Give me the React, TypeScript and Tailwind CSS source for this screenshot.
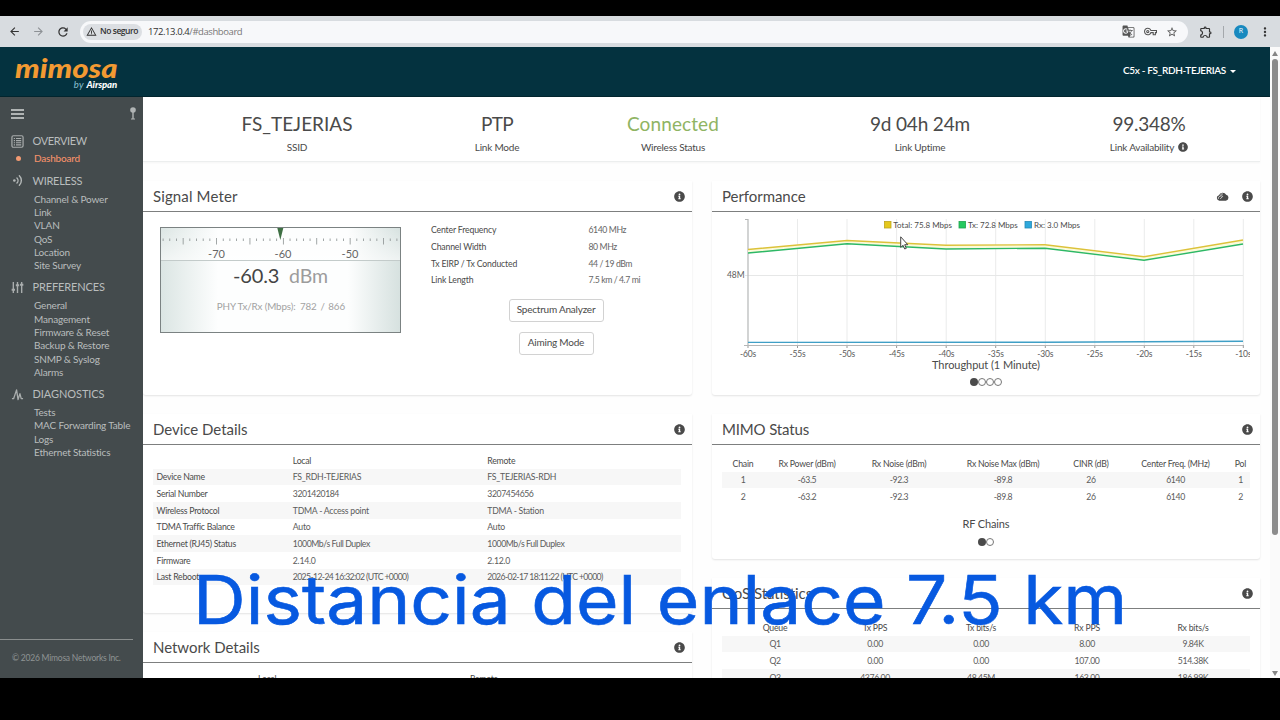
import React from "react";
import {
  MdArrowBack,
  MdArrowForward,
  MdGTranslate,
  MdMoreVert,
  MdOutlineExtension,
  MdOutlineVpnKey,
  MdRefresh,
  MdStarBorder,
  MdWarningAmber,
} from "react-icons/md";
import { FaInfoCircle } from "react-icons/fa";

function BrowserBar() {
  return (
    <div className="flex h-[31px] shrink-0 items-center bg-[#d8dce0] font-['Open_Sans',sans-serif] text-[#333]">
      <div className="flex w-20 items-center pl-2">
        <MdArrowBack className="size-[13px]" />
        <MdArrowForward className="ml-[11px] size-[13px] text-[#8d9195]" />
        <MdRefresh className="ml-[11px] size-[14px]" />
      </div>
      <div className="flex h-[22px] w-[1108px] items-center rounded-full bg-[#f7f8fa] pl-[3px] pr-[10px]">
        <div className="flex h-4 w-[59px] items-center gap-[3px] rounded-full bg-[#dcdfe3] pl-[3px]">
          <MdWarningAmber className="size-[11px]" />
          <span className="text-[8.5px] font-semibold tracking-[-0.45px] whitespace-nowrap">No seguro</span>
        </div>
        <span className="ml-[6px] pt-px text-[9.5px] tracking-[-0.42px] whitespace-nowrap text-[#777]">
          <span className="text-[#333]">172.13.0.4</span>/#dashboard
        </span>
        <div className="ml-auto flex items-center gap-[9px] text-[#555]">
          <MdGTranslate className="size-[13px]" />
          <MdOutlineVpnKey className="size-[13px]" />
          <MdStarBorder className="size-[12px]" />
        </div>
      </div>
      <MdOutlineExtension className="ml-[11px] size-[14px]" />
      <div className="ml-[10px] h-3 w-px bg-[#a4a8ac]" />
      <div className="ml-[10px] flex size-[14px] items-center justify-center rounded-full bg-[#1889bf] text-[7px] text-white">R</div>
      <MdMoreVert className="ml-[10px] size-[14px]" />
    </div>
  );
}

function Header() {
  return (
    <div className="flex h-[50px] shrink-0 items-center justify-between border-b border-[#02252e] bg-[#04323f] pr-[34px] pl-[15px]">
      <div className="flex w-[104px] flex-col pt-[5px]">
        <span className="origin-left scale-x-[1.15] text-[27px] leading-[22px] font-black text-[#f39a32] italic">mimosa</span>
        <span className="self-end pr-[2px] text-[9.5px] leading-[12px] font-black tracking-[-0.1px] text-white italic">
          <span className="pr-[1px] font-normal tracking-[0.3px] text-[#8ec3d6]">by</span> Airspan
        </span>
      </div>
      <div className="mt-[-3px] flex items-center gap-[4px] text-[10px] font-semibold text-white">
        <span className="tracking-[-0.33px] whitespace-nowrap">C5x - FS_RDH-TEJERIAS</span>
        <span className="mt-[2px] border-x-[3px] border-t-[3px] border-x-transparent border-t-white" />
      </div>
    </div>
  );
}

const navIcons = {
  overview: (
    <svg viewBox="0 0 14 14" className="size-[13px]" fill="none" stroke="#a9adad">
      <rect x="1" y="0.8" width="12" height="12.4" rx="1.5" strokeWidth="1.3" />
      <path d="M3 3.7h1.3M3 6h1.3M3 8.3h1.3M3 10.6h1.3M5.4 3.7H11M5.4 6H11M5.4 8.3H11M5.4 10.6H11" strokeWidth="1.2" />
    </svg>
  ),
  wireless: (
    <svg viewBox="0 0 14 14" className="size-[13px]" fill="none" stroke="#b4b8b8" strokeLinecap="round" strokeWidth="1.5">
      <circle cx="3.6" cy="7" r="1.4" fill="#b4b8b8" stroke="none" />
      <path d="M6.4 4.2a4 4 0 0 1 0 5.6M9 1.8a7.4 7.4 0 0 1 0 10.4" />
    </svg>
  ),
  preferences: (
    <svg viewBox="0 0 14 14" className="size-[13px]" fill="none" stroke="#a9adad" strokeWidth="1.5">
      <path d="M2.5 1v12M7 1v12M11.5 1v12" />
      <path d="M0.7 9.5h3.6M5.2 4.5h3.6M9.7 4h3.6" strokeWidth="2.2" />
    </svg>
  ),
  diagnostics: (
    <svg viewBox="0 0 14 14" className="size-[13px]" fill="none" stroke="#a9adad" strokeWidth="1.4" strokeLinejoin="round">
      <path d="M1 11.5h1.8L6 2l1.6 10.5L9.6 6l1.4 5.5h2" />
    </svg>
  ),
};

const nav = [
  { title: "OVERVIEW", cls: "tracking-[-0.38px]", icon: navIcons.overview, items: ["Dashboard"] },
  {
    title: "WIRELESS",
    cls: "tracking-[-0.25px]",
    icon: navIcons.wireless,
    items: ["Channel & Power", "Link", "VLAN", "QoS", "Location", "Site Survey"],
  },
  {
    title: "PREFERENCES",
    cls: "tracking-[-0.12px]",
    icon: navIcons.preferences,
    items: ["General", "Management", "Firmware & Reset", "Backup & Restore", "SNMP & Syslog", "Alarms"],
  },
  {
    title: "DIAGNOSTICS",
    cls: "tracking-[-0.07px]",
    icon: navIcons.diagnostics,
    items: ["Tests", "MAC Forwarding Table", "Logs", "Ethernet Statistics"],
  },
];

function Sidebar() {
  return (
    <div className="flex w-[143px] shrink-0 flex-col bg-[#444b4d] text-[#b9bdbd]">
      <div className="flex h-[33px] items-center justify-between pr-[6px] pl-[11px]">
        <div className="mt-px flex flex-col gap-[2px]">
          <div className="h-[2px] w-[13px] bg-[#b0b4b4]" />
          <div className="h-[2px] w-[13px] bg-[#b0b4b4]" />
          <div className="h-[2px] w-[13px] bg-[#b0b4b4]" />
        </div>
        <svg viewBox="0 0 8 13" className="h-[13px] w-[8px]" fill="#b0b4b4">
          <circle cx="4" cy="3" r="2.8" />
          <path d="M3.3 5h1.4v6.5H3.3zM2 11.5h4v1H2z" />
        </svg>
      </div>
      <div className="flex flex-col gap-[4.6px]">
        {nav.map((g) => (
          <div key={g.title}>
            <div className="flex h-[22px] items-center pl-[11px]">
              <div className="w-[21.5px]">{g.icon}</div>
              <span className={"text-[11px] " + g.cls}>{g.title}</span>
            </div>
            {g.items.map((i) =>
              i === "Dashboard" ? (
                <div key={i} className="flex h-[13.35px] items-center text-[10px] text-[#f5916a]">
                  <div className="ml-[16px] size-[5px] rounded-full bg-[#f29a72]" />
                  <span className="ml-[13px] font-medium tracking-[-0.2px]">{i}</span>
                </div>
              ) : (
                <div key={i} className="flex h-[13.35px] items-center pt-[0.8px] pl-[34px] text-[10px] tracking-[-0.18px] whitespace-nowrap">
                  {i}
                </div>
              ),
            )}
          </div>
        ))}
      </div>
      <div className="mt-auto h-[39px] w-[133px] border-t border-[#8a8e8e] pt-[12px] pl-3 text-[8.5px] tracking-[-0.22px] whitespace-nowrap text-[#8f9494]">
        © 2026 Mimosa Networks Inc.
      </div>
    </div>
  );
}

const stats = [
  { w: "w-[308px]", v: "FS_TEJERIAS", l: "SSID", c: "" },
  { w: "w-[92px]", v: "PTP", l: "Link Mode", c: "tracking-[-0.6px]" },
  { w: "w-[260px]", v: "Connected", l: "Wireless Status", c: "tracking-[0.11px] text-[#8fb463]" },
  { w: "w-[234px]", v: "9d 04h 24m", l: "Link Uptime", c: "tracking-[-0.17px]" },
  { w: "w-[224px]", v: "99.348%", l: "Link Availability", c: "tracking-[-0.26px]" },
];

function Stats() {
  return (
    <div className="flex h-[65px] w-[1117px] shrink-0 border-b border-[#eceeee] bg-white pt-[16px] shadow-[0_1px_2px_rgba(0,0,0,0.04)]">
      {stats.map((s) => (
        <div key={s.l} className={"flex shrink-0 flex-col items-center " + s.w}>
          <span className={"text-[19px] leading-[22px] whitespace-nowrap " + s.c}>{s.v}</span>
          <div className="mt-[5px] flex items-center gap-[4px] text-[10px] leading-[14px] tracking-[-0.22px] whitespace-nowrap">
            {s.l}
            {s.l === "Link Availability" && <FaInfoCircle className="size-[10px]" />}
          </div>
        </div>
      ))}
    </div>
  );
}

function CloudIcon() {
  return (
    <svg viewBox="0 0 14 12" className="h-[11px] w-[13px]">
      <path d="M3.5 10.5a3 3 0 0 1-.4-5.9A4.3 4.3 0 0 1 11 4.2a3.2 3.2 0 0 1-.3 6.3z" fill="#4a4a4a" />
      <path d="M2.5 8.5a3 3 0 0 1 4.6-2.8M4.6 8.6l2.6-2.7M4.8 4.2a3 3 0 0 1 2.6-1" fill="none" stroke="#fff" strokeWidth="0.8" />
    </svg>
  );
}

function Card({ title, cls, h, cloud, children }: { title: string; cls: string; h: string; cloud?: boolean; children: React.ReactNode }) {
  return (
    <section className={"flex shrink-0 flex-col rounded-b-[3px] bg-white shadow-[0_1px_2px_rgba(0,0,0,0.11)] " + h}>
      <div className="flex h-[31px] shrink-0 items-center border-b border-[#7d7f7f] pr-[7px] pl-[10px]">
        <h2 className={"mt-[-1px] text-[15px] leading-[20px] whitespace-nowrap " + cls}>{title}</h2>
        <div className="ml-auto flex items-center gap-[13px]">
          {cloud && <CloudIcon />}
          <FaInfoCircle className="size-[11px]" />
        </div>
      </div>
      {children}
    </section>
  );
}

function Gauge() {
  const ticks = Array.from({ length: 36 }, (_, i) => i);
  return (
    <svg width="241" height="106" viewBox="0 0 241 106" className="block shrink-0 font-[Lato]">
      <defs>
        <linearGradient id="panel" x1="0" x2="1">
          <stop offset="0" stopColor="#dbe5e3" />
          <stop offset="0.24" stopColor="#fdfefe" />
          <stop offset="0.78" stopColor="#fdfefe" />
          <stop offset="1" stopColor="#d6e1df" />
        </linearGradient>
        <linearGradient id="shade" x1="0" x2="0" y1="0" y2="1">
          <stop offset="0" stopColor="#fff" stopOpacity="0" />
          <stop offset="1" stopColor="#fff" stopOpacity="0.6" />
        </linearGradient>
      </defs>
      <rect x="0.5" y="0.5" width="240" height="105" fill="url(#panel)" />
      <rect x="1" y="1" width="239" height="33" fill="url(#shade)" />
      {ticks.map((i) => {
        const major = (i - 3) % 5 === 0;
        return (
          <rect key={i} x={2.7 + i * 6.68} y={major ? 11 : 11.5} width="0.8" height={major ? 6.5 : 2.5} fill="#8b9191" />
        );
      })}
      <line x1="1" x2="240" y1="33.5" y2="33.5" stroke="#c3cbca" />
      <path d="M117.3 1h6l-3 12z" fill="#3f7044" />
      <g fontSize="11" fill="#666" textAnchor="middle">
        <text x="56.5" y="30.5">-70</text>
        <text x="123" y="30.5">-60</text>
        <text x="190" y="30.5">-50</text>
      </g>
      <text x="73" y="55.5" fontSize="20" fill="#444" letterSpacing="-0.15">-60.3</text>
      <text x="129" y="55.5" fontSize="19.5" fill="#9c9c9c" letterSpacing="-0.1">dBm</text>
      <g fontSize="9.8" fill="#a2a2a2" letterSpacing="-0.12">
        <text x="56.8" y="83">PHY Tx/Rx (Mbps):</text>
        <text x="140" y="83">782</text>
        <text x="160.5" y="83">/</text>
        <text x="168.3" y="83">866</text>
      </g>
      <rect x="0.5" y="0.5" width="240" height="105" fill="none" stroke="#7b8282" />
    </svg>
  );
}

const link = [
  ["Center Frequency", "6140 MHz"],
  ["Channel Width", "80 MHz"],
  ["Tx EIRP / Tx Conducted", "44 / 19 dBm"],
  ["Link Length", "7.5 km / 4.7 mi"],
];

function SignalMeter() {
  return (
    <Card title="Signal Meter" cls="tracking-[0.13px]" h="h-[214px]">
      <div className="flex pt-[15px] pl-[17px]">
        <Gauge />
        <div className="ml-[30px] flex w-[250px] flex-col">
          <div className="mt-[-5.6px] flex flex-col">
            {link.map(([a, b]) => (
              <div key={a} className="flex h-[16.7px] items-center text-[8.7px] tracking-[-0.16px] whitespace-nowrap">
                <span className="w-[157.5px]">{a}</span>
                <span className="tracking-[-0.42px] text-[#666]">{b}</span>
              </div>
            ))}
          </div>
          <div className="mt-[10.6px] flex flex-col items-center gap-[10px] text-[10px] tracking-[-0.22px]">
            <button className="h-[23px] w-[95px] rounded-[3px] border border-[#d2d2d2] bg-white pb-px whitespace-nowrap">Spectrum Analyzer</button>
            <button className="h-[23px] w-[75px] rounded-[3px] border border-[#d2d2d2] bg-white pb-px whitespace-nowrap">Aiming Mode</button>
          </div>
        </div>
      </div>
    </Card>
  );
}

function Dots({ n }: { n: number }) {
  return (
    <div className="flex items-center justify-center gap-[0.3px]">
      {Array.from({ length: n }, (_, i) => (
        <div
          key={i}
          className={i === 0 ? "size-[8px] rounded-full bg-[#4a4a4a]" : "size-[7.8px] rounded-full border border-[#777] bg-white"}
        />
      ))}
    </div>
  );
}

const xs = [36, 85.5, 135, 184.6, 234.2, 283.7, 333.3, 382.8, 432.3, 481.8, 531.3];

function Chart() {
  return (
    <svg width="538" height="147" viewBox="0 0 538 147" className="block shrink-0 font-[Lato]">
      {xs.map((x, i) => (
        <g key={x}>
          {i > 0 && <line x1={x} x2={x} y1="7" y2="133" stroke="#eaebeb" />}
          <line x1={x} x2={x} y1="133" y2="136" stroke="#999" />
        </g>
      ))}
      <line x1="33" x2="531" y1="63.5" y2="63.5" stroke="#e6e7e7" />
      <path d="M33 7.5h3v126M32 133.5H531" fill="none" stroke="#b5b7b7" strokeWidth="1.2" />
      <path d="M36 37.5L135 28.5L234 33.3L333 32.7L432 44.7L531 28v4L432 48.3L333 36.2L234 37L135 31.8L36 41z" fill="#fbfbdc" />
      <polyline points="36,37.5 135,28.5 234,33.3 333,32.7 432,44.7 531,28" fill="none" stroke="#dcc23a" strokeWidth="1.4" />
      <polyline points="36,41 135,31.8 234,37 333,36.2 432,48.3 531,32" fill="none" stroke="#2db866" strokeWidth="1.4" />
      <polyline points="36,130.4 333,130.2 531,129.3" fill="none" stroke="#3f9fc6" strokeWidth="1.4" />
      <g fontSize="8.5" fill="#5c5c5c">
        <text x="15" y="66" letterSpacing="-0.1">48M</text>
        {xs.map((x, i) => (
          <text key={x} x={x} y="144.5" textAnchor="middle" letterSpacing="-0.2">
            {`-${60 - i * 5}s`}
          </text>
        ))}
      </g>
      <rect x="172.5" y="9.5" width="6.5" height="6.5" fill="#e5c81c" stroke="#bda51c" strokeWidth="0.8" />
      <rect x="247" y="9.5" width="6.5" height="6.5" fill="#26c95f" stroke="#1fa44f" strokeWidth="0.8" />
      <rect x="313" y="9.5" width="6.5" height="6.5" fill="#2ea8dc" stroke="#2389b6" strokeWidth="0.8" />
      <g fontSize="8" fill="#4c4c4c">
        <text x="181.3" y="16">Total: 75.8 Mbps</text>
        <text x="256" y="16">Tx: 72.8 Mbps</text>
        <text x="322" y="16">Rx: 3.0 Mbps</text>
      </g>
    </svg>
  );
}

function Performance() {
  return (
    <Card title="Performance" cls="tracking-[-0.05px]" h="h-[214px]" cloud>
      <Chart />
      <div className="text-center text-[11px] leading-[12px] tracking-[-0.06px]">Throughput (1 Minute)</div>
      <div className="mt-[7px]">
        <Dots n={4} />
      </div>
    </Card>
  );
}

const device = [
  ["", "Local", "Remote"],
  ["Device Name", "FS_RDH-TEJERIAS", "FS_TEJERIAS-RDH"],
  ["Serial Number", "3201420184", "3207454656"],
  ["Wireless Protocol", "TDMA - Access point", "TDMA - Station"],
  ["TDMA Traffic Balance", "Auto", "Auto"],
  ["Ethernet (RJ45) Status", "1000Mb/s Full Duplex", "1000Mb/s Full Duplex"],
  ["Firmware", "2.14.0", "2.12.0"],
  ["Last Reboot", "2025-12-24 16:32:02 (UTC +0000)", "2026-02-17 18:11:22 (UTC +0000)"],
];

function track(s: string) {
  if (/^20\d\d-/.test(s)) return "tracking-[-0.63px]";
  if (/^\d{4}/.test(s)) return "tracking-[-0.42px]";
  return "tracking-[-0.25px]";
}

function DeviceDetails() {
  return (
    <Card title="Device Details" cls="tracking-[-0.02px]" h="h-[199px]">
      <div className="mt-[7px] mr-[11px] ml-[10px]">
        {device.map((r, i) => (
          <div
            key={i}
            className={"flex h-[16.67px] items-center pl-[3.5px] text-[8.7px] whitespace-nowrap " + (i % 2 ? "bg-[#f7f7f7]" : "")}
          >
            <span className={"w-[136.3px] shrink-0 " + track(r[0])}>{r[0]}</span>
            <span className={"w-[194.5px] shrink-0 " + (i ? "text-[#5c5c5c] " : "") + track(r[1])}>{r[1]}</span>
            <span className={(i ? "text-[#5c5c5c] " : "") + track(r[2])}>{r[2]}</span>
          </div>
        ))}
      </div>
    </Card>
  );
}

function NetworkDetails() {
  return (
    <Card title="Network Details" cls="tracking-[-0.04px]" h="h-[199px]">
      <div className="mt-[7px] flex h-[16.67px] items-center pl-[115px] text-[8.7px] tracking-[-0.25px]">
        <span className="w-[212px]">Local</span>
        <span>Remote</span>
      </div>
    </Card>
  );
}

function Table({ rows, cols }: { rows: string[][]; cols: string[] }) {
  return (
    <div className="mr-[10px] ml-[10px]">
      {rows.map((r, i) => (
        <div key={i} className={"flex h-[16.67px] items-center text-[8.7px] tracking-[-0.22px] " + (i % 2 ? "bg-[#f7f7f7]" : "")}>
          {r.map((c, j) => (
            <span
              key={j}
              className={"shrink-0 text-center whitespace-nowrap " + cols[j] + (i ? " tracking-[-0.38px] text-[#5c5c5c]" : "")}
            >
              {c}
            </span>
          ))}
        </div>
      ))}
    </div>
  );
}

function MimoStatus() {
  return (
    <Card title="MIMO Status" cls="tracking-[-0.15px]" h="h-[145px]">
      <div className="h-[10px] shrink-0" />
      <Table
        cols={["w-[42px]", "w-[86px]", "w-[98px]", "w-[110px]", "w-[66px]", "w-[103px]", "w-[27px]"]}
        rows={[
          ["Chain", "Rx Power (dBm)", "Rx Noise (dBm)", "Rx Noise Max (dBm)", "CINR (dB)", "Center Freq. (MHz)", "Pol"],
          ["1", "-63.5", "-92.3", "-89.8", "26", "6140", "1"],
          ["2", "-63.2", "-92.3", "-89.8", "26", "6140", "2"],
        ]}
      />
      <div className="mt-[12.5px] text-center text-[11px] leading-[14px] tracking-[-0.15px]">RF Chains</div>
      <div className="mt-[6.5px]">
        <Dots n={2} />
      </div>
    </Card>
  );
}

function QosStatistics() {
  return (
    <Card title="QoS Statistics" cls="tracking-[-0.05px]" h="h-[199px]">
      <div className="h-[10px] shrink-0" />
      <Table
        cols={["w-[106px]", "w-[94px]", "w-[118px]", "w-[94px]", "w-[118px]"]}
        rows={[
          ["Queue", "Tx PPS", "Tx bits/s", "Rx PPS", "Rx bits/s"],
          ["Q1", "0.00", "0.00", "8.00", "9.84K"],
          ["Q2", "0.00", "0.00", "107.00", "514.38K"],
          ["Q3", "4376.00", "48.45M", "163.00", "186.99K"],
        ]}
      />
    </Card>
  );
}

function ScrollBar() {
  return (
    <div className="flex w-[10px] shrink-0 flex-col items-center bg-[#fafafa] pt-[4px] pb-[2px]">
      <div className="border-x-[3px] border-b-[5px] border-x-transparent border-b-[#858585]" />
      <div className="mt-[3px] h-[476px] w-[6px] rounded-full bg-[#8b8b8b]" />
      <div className="mt-auto border-x-[3px] border-t-[5px] border-x-transparent border-t-[#858585]" />
    </div>
  );
}

export default function App() {
  return (
    <div className="relative flex h-[720px] w-[1280px] flex-col overflow-hidden bg-black pt-4 pb-[42px] font-[Lato,sans-serif] text-[#4a4a4a]">
      <BrowserBar />
      <div className="flex min-h-0 flex-1">
        <div className="flex min-w-0 flex-1 flex-col">
          <Header />
          <div className="flex min-h-0 flex-1">
            <Sidebar />
            <main className="flex min-w-0 flex-1 flex-col overflow-hidden bg-[#fefefe]">
              <Stats />
              <div className="mt-[19px] flex gap-[20px]">
                <div className="flex w-[549px] flex-col gap-[19px]">
                  <SignalMeter />
                  <DeviceDetails />
                  <NetworkDetails />
                </div>
                <div className="flex w-[548px] flex-col gap-[19px]">
                  <Performance />
                  <MimoStatus />
                  <QosStatistics />
                </div>
              </div>
            </main>
          </div>
        </div>
        <ScrollBar />
      </div>
      <svg viewBox="0 0 9 14" className="absolute top-[236px] left-[900px] h-[14px] w-[9px]">
        <path d="M0.7 0.8v10.6l2.4-2.1 1.6 3.7 1.6-.7-1.6-3.6h3.1z" fill="#fff" stroke="#333" strokeWidth="0.9" />
      </svg>
      <div className="absolute top-[559.5px] left-[193px] flex origin-left scale-x-[1.09] gap-[17px] font-['Inter',sans-serif] text-[67px] leading-[80px] whitespace-nowrap text-[#0759e0] [-webkit-text-stroke:0.6px_#0759e0]">
        Distancia del enlace 7.5 km
      </div>
    </div>
  );
}
